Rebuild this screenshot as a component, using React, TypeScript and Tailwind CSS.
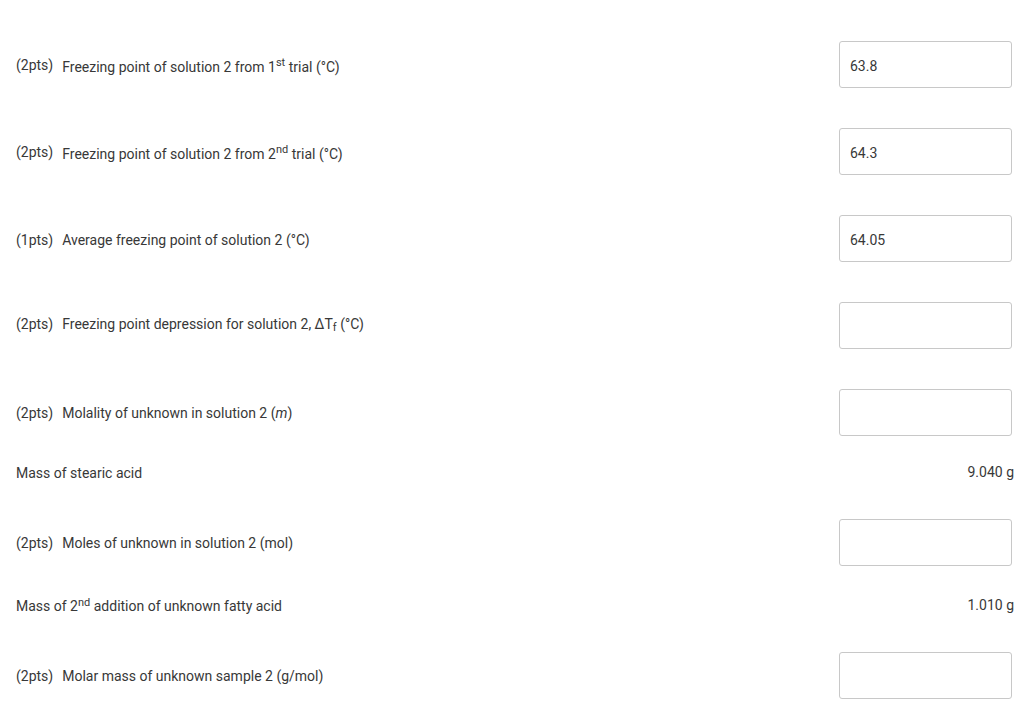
import React from "react";

type Row =
  | { kind: "input"; pts: string; label: React.ReactNode; value?: string; mt: string; shift?: string }
  | { kind: "given"; label: React.ReactNode; value: string; mt: string };

const Sup = ({ children }: { children: React.ReactNode }) => (
  <sup className="text-[11px] leading-none">{children}</sup>
);

const rows: Row[] = [
  {
    kind: "input",
    pts: "(2pts)",
    label: (
      <span className="translate-y-[2px]">
        Freezing point of solution 2 from 1<Sup>st</Sup> trial (°C)
      </span>
    ),
    value: "63.8",
    mt: "mt-[41px]",
  },
  {
    kind: "input",
    pts: "(2pts)",
    label: (
      <span className="translate-y-[2px]">
        Freezing point of solution 2 from 2<Sup>nd</Sup> trial (°C)
      </span>
    ),
    value: "64.3",
    mt: "mt-[40px]",
  },
  {
    kind: "input",
    pts: "(1pts)",
    label: <span>Average freezing point of solution 2 (°C)</span>,
    value: "64.05",
    mt: "mt-[40px]",
    shift: "translate-y-[1px]",
  },
  {
    kind: "input",
    pts: "(2pts)",
    label: (
      <span>
        Freezing point depression for solution 2, ΔT<sub className="text-[11px] leading-none">f</sub> (°C)
      </span>
    ),
    mt: "mt-[40px]",
    shift: "-translate-y-[2px]",
  },
  {
    kind: "input",
    pts: "(2pts)",
    label: (
      <span>
        Molality of unknown in solution 2 (<i>m</i>)
      </span>
    ),
    mt: "mt-[40px]",
  },
  { kind: "given", label: <>Mass of stearic acid</>, value: "9.040 g", mt: "mt-[26px]" },
  {
    kind: "input",
    pts: "(2pts)",
    label: <span>Moles of unknown in solution 2 (mol)</span>,
    mt: "mt-[37px]",
  },
  {
    kind: "given",
    label: (
      <>
        Mass of 2<Sup>nd</Sup> addition of unknown fatty acid
      </>
    ),
    value: "1.010 g",
    mt: "mt-[29px]",
  },
  {
    kind: "input",
    pts: "(2pts)",
    label: <span>Molar mass of unknown sample 2 (g/mol)</span>,
    mt: "mt-[37px]",
  },
];

export default function App() {
  return (
    <main
      className="flex h-[720px] w-[1024px] flex-col overflow-hidden bg-white pl-4 pr-3 text-[14px] text-[#383838]"
      style={{ fontFamily: "Roboto, 'Noto Sans', sans-serif" }}
    >
      {rows.map((r, i) =>
        r.kind === "input" ? (
          <div key={i} className={`${r.mt} flex h-[47px] shrink-0 items-center justify-between`}>
            <div className={`flex items-center gap-[9px] leading-none ${r.shift ?? ""}`}>
              <span>{r.pts}</span>
              {r.label}
            </div>
            <div className="flex h-[47px] w-[173px] items-center rounded-[3px] border border-[#c8c8c8] px-[10px] pt-[3px]">
              {r.value}
            </div>
          </div>
        ) : (
          <div key={i} className={`${r.mt} flex h-[20px] shrink-0 items-center justify-between`}>
            <span className="translate-y-[1px] leading-none">{r.label}</span>
            <span className="-mr-[2px] leading-none">{r.value}</span>
          </div>
        )
      )}
    </main>
  );
}
